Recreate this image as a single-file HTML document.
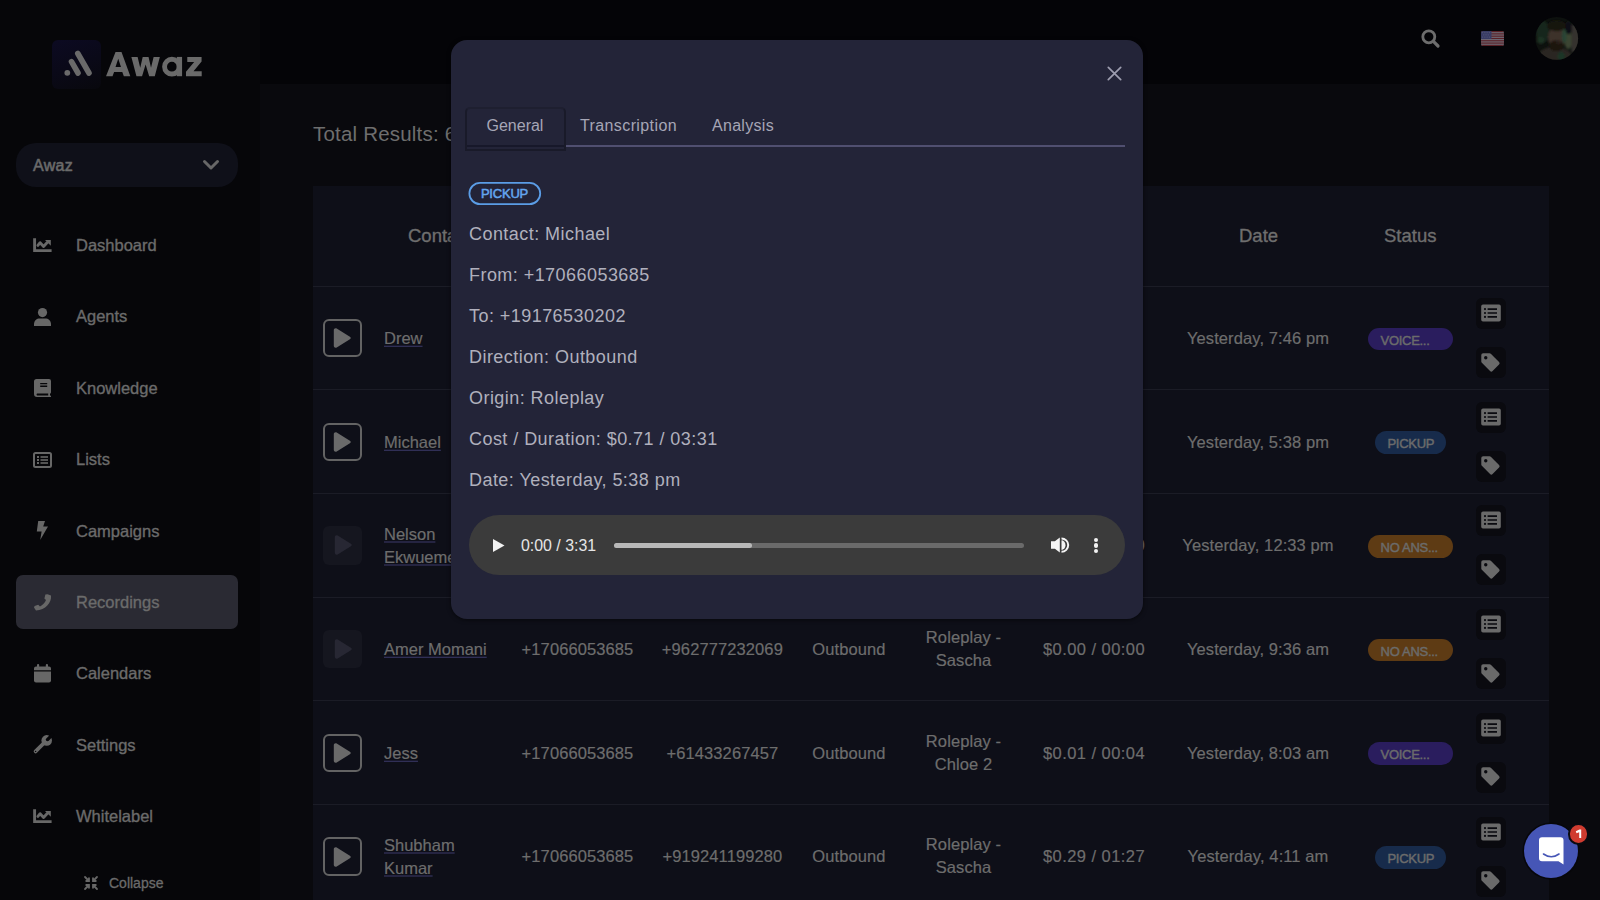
<!DOCTYPE html>
<html><head><meta charset="utf-8">
<style>
*{margin:0;padding:0;box-sizing:border-box}
html,body{width:1600px;height:900px;overflow:hidden;background:#040407;font-family:"Liberation Sans",sans-serif}
.abs{position:absolute}
svg{position:absolute;overflow:visible}
#sidebar{position:absolute;left:0;top:0;width:260px;height:900px;background:#060609}
#header{position:absolute;left:260px;top:0;width:1340px;height:84px;background:#040407}
#main{position:absolute;left:260px;top:84px;width:1340px;height:816px;background:#09090d}
.nav{position:absolute;left:76px;font-size:16.5px;line-height:20px;color:#6b6b6b;-webkit-text-stroke:0.35px #6b6b6b;white-space:nowrap}
#table{position:absolute;left:313px;top:186px;width:1236px;height:714px;background:#0e0f18}
.sep{position:absolute;left:313px;width:1236px;height:1px;background:#1b1c26}
.th{position:absolute;top:224px;font-size:18.5px;line-height:24px;color:#6e6e6e;-webkit-text-stroke:0.35px #6e6e6e;white-space:nowrap}
.row{position:absolute;left:313px;width:1236px;height:103.7px}
.td{position:absolute;top:50%;font-size:16.5px;letter-spacing:0.1px;color:#6d6d6d;-webkit-text-stroke:0.2px #6d6d6d;white-space:nowrap;line-height:23px;transform:translate(-50%,-50%);text-align:center}
.name{position:absolute;left:71px;top:50%;transform:translateY(-50%);font-size:16.5px;color:#6d6d6d;-webkit-text-stroke:0.2px #6d6d6d;line-height:22.5px;white-space:nowrap}
.name span{text-decoration:underline;text-decoration-color:#3d3b6b;text-underline-offset:2px;text-decoration-thickness:1px}
.play{position:absolute;left:10px;top:50%;margin-top:-19px;width:39px;height:38.5px;border:2px solid #636363;border-radius:6px}
.play svg{left:8.2px;top:7.4px}
.play.dis svg{left:10.5px;top:9.2px}
.play.dis{border:none;background:#15161f}
.badge{position:absolute;top:50%;margin-top:-10.3px;height:22.7px;border-radius:12px;font-size:13px;color:#6b6b6b;-webkit-text-stroke:0.45px #6b6b6b;letter-spacing:-0.3px;line-height:25.2px;padding-left:12.8px;text-align:left;white-space:nowrap}
.abox{position:absolute;left:1163px;width:30px;height:31px;background:#0a0a0f;border-radius:6px}
.abox svg{left:5px;top:6px}
#modal{position:absolute;left:450.5px;top:39.5px;width:692.5px;height:579.3px;background:#232438;border-radius:16px;box-shadow:0 1px 4px rgba(0,0,0,.55)}
.ml{position:absolute;left:469px;font-size:18px;line-height:22px;letter-spacing:0.45px;color:#b0b0bd;white-space:nowrap}
</style></head>
<body>
<div id="sidebar"></div>
<div id="header"></div>
<div id="main"></div>
<div class="abs" style="left:16px;top:575px;width:222px;height:54px;border-radius:7px;background:#2a2a33"></div>

<!-- logo -->
<div class="abs" style="left:52px;top:40px;width:49px;height:49px;border-radius:6px;background:linear-gradient(160deg,#0c0a22 0%,#0a0918 50%,#08080d 100%)"></div>
<svg style="left:52px;top:40px" width="49" height="49" viewBox="0 0 49 49">
  <circle cx="15.3" cy="32.8" r="2.9" fill="#6a6a6a"/>
  <line x1="19.5" y1="21.6" x2="26" y2="33" stroke="#6a6a6a" stroke-width="5.6" stroke-linecap="round"/>
  <line x1="25.8" y1="13.5" x2="37" y2="33" stroke="#6a6a6a" stroke-width="5.6" stroke-linecap="round"/>
</svg>
<svg style="left:102px;top:46px" width="104" height="36" viewBox="0 0 1600 554" preserveAspectRatio="none" fill="#6a6a6a">
  <path fill-rule="evenodd" d="M62,465 L208,92 L300,92 L436,465 L336,465 L312,402 L186,402 L162,465 Z M208,322 L292,322 L250,196 Z"/>
  <path d="M452,168 L548,168 L588,335 L626,168 L716,168 L754,335 L794,168 L890,168 L812,465 L726,465 L671,285 L616,465 L530,465 Z"/>
  <path fill-rule="evenodd" d="M925,318 A150,152 0 1,0 1225,318 A150,152 0 1,0 925,318 Z M1000,318 A75,76 0 1,0 1150,318 A75,76 0 1,0 1000,318 Z"/>
  <rect x="1150" y="168" width="82" height="297"/>
  <path d="M1312,168 L1532,168 L1532,238 L1408,388 L1534,388 L1534,465 L1292,465 L1292,396 L1418,246 L1312,246 Z"/>
</svg>

<!-- dropdown -->
<div class="abs" style="left:16px;top:143px;width:222px;height:44px;border-radius:20px;background:#0f1019"></div>
<div class="abs" style="left:33px;top:155.8px;font-size:16px;line-height:20px;letter-spacing:0.3px;color:#6b6b6b;-webkit-text-stroke:0.55px #6b6b6b">Awaz</div>
<svg style="left:203px;top:160px" width="16" height="10" viewBox="0 0 16 10"><path d="M1.5 1.5 L8 8 L14.5 1.5" fill="none" stroke="#676767" stroke-width="3" stroke-linecap="round" stroke-linejoin="round"/></svg>

<!-- nav icons -->
<svg style="left:28px;top:232px" width="30" height="26" viewBox="0 0 30 26">
  <path d="M6.6 6.2 V18.6 H23.6" fill="none" stroke="#686868" stroke-width="2.9" stroke-linejoin="miter"/>
  <path d="M9.9 13.4 L12.1 10.7 L15.6 14.4 L19.2 10.6" fill="none" stroke="#686868" stroke-width="2.9" stroke-linecap="round" stroke-linejoin="round"/>
  <path d="M17 8.1 H22.8 V13.7 Z" fill="#686868"/>
</svg>
<svg style="left:34px;top:308px" width="17" height="18" viewBox="0 0 17 18" fill="#676767">
  <circle cx="8.5" cy="4.6" r="4.6"/>
  <path d="M0 16.2 C0 12.4 2.8 10.4 5.6 10.4 H11.4 C14.2 10.4 17 12.4 17 16.2 V18 H0 Z"/>
</svg>
<svg style="left:34px;top:379px" width="17" height="18" viewBox="0 0 17 18" fill="#676767">
  <path d="M2.5 0 H15 A2 2 0 0 1 17 2 V13 C17 14 16.5 14.5 16 14.7 V16.3 C16.5 16.5 17 16.8 17 17.4 V18 H3 A3 3 0 0 1 0 15 V2.5 A2.5 2.5 0 0 1 2.5 0 Z M3 14.6 A1.2 1.2 0 0 0 3 16.4 H14.2 V14.6 Z M6.2 4 V5.3 H13.2 V4 Z M6.2 6.6 V7.9 H13.2 V6.6 Z" fill-rule="evenodd"/>
</svg>
<svg style="left:33px;top:452px" width="19" height="16" viewBox="0 0 19 16" fill="none" stroke="#676767">
  <rect x="1" y="1" width="17" height="14" rx="1.5" stroke-width="2"/>
  <g fill="#676767" stroke="none"><rect x="4" y="4" width="2" height="2"/><rect x="4" y="7" width="2" height="2"/><rect x="4" y="10" width="2" height="2"/><rect x="7.5" y="4.2" width="7.5" height="1.6"/><rect x="7.5" y="7.2" width="7.5" height="1.6"/><rect x="7.5" y="10.2" width="7.5" height="1.6"/></g>
</svg>
<svg style="left:36px;top:521px" width="13" height="19" viewBox="0 0 13 19" fill="#676767">
  <path d="M2.2 0 H9 L7.2 5.6 H12 L4.2 19 L5.6 10.4 H0.8 Z"/>
</svg>
<svg style="left:33px;top:593px" width="19" height="18" viewBox="0 0 19 18" fill="#676767">
  <path d="M14.5 1.2 L18 2.4 C18.8 9.5 12.5 17 3 17.5 L1 14.5 L1.6 13 L5.2 11.8 L7 13.4 C9.6 12.2 12 9.6 13 7 L11.4 5.4 L12.4 1.6 Z"/>
</svg>
<svg style="left:34px;top:664px" width="17" height="19" viewBox="0 0 17 19" fill="#676767">
  <rect x="3" y="0" width="2.2" height="4" rx="1"/><rect x="11.8" y="0" width="2.2" height="4" rx="1"/>
  <path d="M2 2.4 H15 A2 2 0 0 1 17 4.4 V6.2 H0 V4.4 A2 2 0 0 1 2 2.4 Z"/>
  <path d="M0 7.4 H17 V16.6 A2 2 0 0 1 15 18.6 H2 A2 2 0 0 1 0 16.6 Z"/>
</svg>
<svg style="left:28px;top:730px" width="30" height="30" viewBox="0 0 30 30">
  <line x1="18.5" y1="10.5" x2="7.6" y2="21.4" stroke="#686868" stroke-width="3.8" stroke-linecap="round"/>
  <circle cx="18.7" cy="10.4" r="5.3" fill="#686868"/>
  <line x1="19.6" y1="9.5" x2="25.5" y2="3.6" stroke="#060609" stroke-width="3.2"/>
  <circle cx="19.5" cy="9.6" r="1.7" fill="#060609"/>
  <circle cx="7.6" cy="21.4" r="0.7" fill="#060609"/>
</svg>
<svg style="left:28px;top:803px" width="30" height="26" viewBox="0 0 30 26">
  <path d="M6.6 6.2 V18.6 H23.6" fill="none" stroke="#686868" stroke-width="2.9" stroke-linejoin="miter"/>
  <path d="M9.9 13.4 L12.1 10.7 L15.6 14.4 L19.2 10.6" fill="none" stroke="#686868" stroke-width="2.9" stroke-linecap="round" stroke-linejoin="round"/>
  <path d="M17 8.1 H22.8 V13.7 Z" fill="#686868"/>
</svg>
<svg style="left:84px;top:876px" width="14" height="14" viewBox="0 0 14 14" fill="none" stroke="#676767" stroke-width="1.8" stroke-linecap="round">
  <path d="M1 1 L5 5 M5 2.2 V5 H2.2 M13 1 L9 5 M9 2.2 V5 H11.8 M1 13 L5 9 M2.2 9 H5 V11.8 M13 13 L9 9 M11.8 9 H9 V11.8"/>
</svg>

<!-- nav text -->
<div class="nav" style="top:234.7px">Dashboard</div>
<div class="nav" style="top:306.2px">Agents</div>
<div class="nav" style="top:377.7px">Knowledge</div>
<div class="nav" style="top:449.2px">Lists</div>
<div class="nav" style="top:520.7px">Campaigns</div>
<div class="nav" style="top:591.7px">Recordings</div>
<div class="nav" style="top:663.2px">Calendars</div>
<div class="nav" style="top:734.7px">Settings</div>
<div class="nav" style="top:806.2px">Whitelabel</div>
<div class="abs" style="left:109px;top:874px;font-size:14px;line-height:18px;color:#6b6b6b;-webkit-text-stroke:0.3px #6b6b6b">Collapse</div>
<!-- header icons -->
<svg style="left:1421px;top:29px" width="19" height="19" viewBox="0 0 19 19" fill="none" stroke="#6d6d6d" stroke-linecap="round">
  <circle cx="7.8" cy="7.8" r="6" stroke-width="2.8"/>
  <line x1="12.4" y1="12.4" x2="17" y2="17" stroke-width="3.2"/>
</svg>
<svg style="left:1481px;top:31px" width="23" height="15" viewBox="0 0 23 15">
  <defs><clipPath id="fc"><rect x="0" y="0" width="23" height="15" rx="2"/></clipPath></defs>
  <g clip-path="url(#fc)">
  <rect width="23" height="15" fill="#6e6a75"/>
  <rect y="0" width="23" height="1.15" fill="#5a2026"/><rect y="2.3" width="23" height="1.15" fill="#5a2026"/><rect y="4.6" width="23" height="1.15" fill="#5a2026"/><rect y="6.9" width="23" height="1.15" fill="#5a2026"/><rect y="9.2" width="23" height="1.15" fill="#5a2026"/><rect y="11.5" width="23" height="1.15" fill="#5a2026"/><rect y="13.8" width="23" height="1.2" fill="#5a2026"/>
  <rect width="10.5" height="8" fill="#383b64"/><g fill="#5a5c7a"><rect x="1.2" y="1.2" width="1" height="1"/><rect x="3.4" y="1.2" width="1" height="1"/><rect x="5.6" y="1.2" width="1" height="1"/><rect x="7.8" y="1.2" width="1" height="1"/><rect x="2.3" y="3.4" width="1" height="1"/><rect x="4.5" y="3.4" width="1" height="1"/><rect x="6.7" y="3.4" width="1" height="1"/><rect x="1.2" y="5.6" width="1" height="1"/><rect x="3.4" y="5.6" width="1" height="1"/><rect x="5.6" y="5.6" width="1" height="1"/><rect x="7.8" y="5.6" width="1" height="1"/></g>
  </g>
</svg>
<svg style="left:1530px;top:12px" width="54" height="54" viewBox="0 0 900 900">
  <defs><clipPath id="av"><circle cx="445" cy="440" r="357"/></clipPath>
  <filter id="bl" x="-20%" y="-20%" width="140%" height="140%"><feGaussianBlur stdDeviation="22"/></filter></defs>
  <g clip-path="url(#av)">
    <rect x="0" y="0" width="900" height="900" fill="#0d110e"/>
    <g filter="url(#bl)">
      <ellipse cx="210" cy="330" rx="110" ry="190" fill="#15261b"/>
      <ellipse cx="180" cy="470" rx="60" ry="60" fill="#1e3022"/>
      <ellipse cx="640" cy="470" rx="70" ry="150" fill="#3a4530"/>
      <rect x="690" y="210" width="150" height="460" fill="#34302d"/>
      <ellipse cx="640" cy="260" rx="60" ry="110" fill="#0b0d14"/>
      <ellipse cx="410" cy="730" rx="280" ry="150" fill="#2c2622"/>
      <ellipse cx="520" cy="740" rx="60" ry="80" fill="#1f3427"/>
      <ellipse cx="450" cy="420" rx="150" ry="190" fill="#3d3129"/>
      <ellipse cx="570" cy="400" rx="40" ry="120" fill="#2a4434"/>
      <ellipse cx="445" cy="230" rx="160" ry="90" fill="#17120f"/>
      <ellipse cx="440" cy="560" rx="120" ry="90" fill="#1c1611"/>
      <ellipse cx="470" cy="510" rx="50" ry="22" fill="#2b231d"/>
    </g>
  </g>
</svg>
<!-- main -->
<div class="abs" style="left:313px;top:122px;font-size:20.5px;line-height:24px;letter-spacing:0.2px;color:#6e6e6e">Total Results: 64</div>
<div id="table"></div>
<div class="sep" style="top:285.5px"></div>
<div class="sep" style="top:389.2px"></div>
<div class="sep" style="top:492.9px"></div>
<div class="sep" style="top:596.6px"></div>
<div class="sep" style="top:700.3px"></div>
<div class="sep" style="top:804px"></div>
<div class="th" style="left:408px">Contact</div>
<div class="th" style="left:1239px">Date</div>
<div class="th" style="left:1384px">Status</div>

<!--ROWS-->
<div class="row" style="top:286.0px">
<div class="play"><svg width="18" height="20" viewBox="0 0 18 20"><path d="M0.8 2.2 C0.8 0.6 2.4 -0.2 3.7 0.6 L16.9 8.7 C18 9.4 18 10.6 16.9 11.3 L3.7 19.4 C2.4 20.2 0.8 19.4 0.8 17.8 Z" fill="#6a6a6a"/></svg></div>
<div class="name"><span>Drew</span></div>
<div class="td" style="left:264.5px">+17066053685</div>
<div class="td" style="left:409.4px">+19176530202</div>
<div class="td" style="left:536.0px">Outbound</div>
<div class="td" style="left:781.0px;letter-spacing:0.1px">$0.05 / 00:19</div>
<div class="td" style="left:945.0px">Yesterday, 7:46 pm</div>
<div class="td org" style="left:650.5px">Roleplay -<br>Sascha</div>
<div class="badge" style="left:1054.8px;width:85px;background:#2a1d5e">VOICE...</div>
<div class="abox" style="top:12px"><svg width="20" height="18" viewBox="0 0 20 18"><path fill="#6a6a6a" fill-rule="evenodd" d="M2 0.5 H18 A1.8 1.8 0 0 1 19.8 2.3 V15.7 A1.8 1.8 0 0 1 18 17.5 H2 A1.8 1.8 0 0 1 0.2 15.7 V2.3 A1.8 1.8 0 0 1 2 0.5 Z M4 4 A1.1 1.1 0 1 0 4 6.2 A1.1 1.1 0 1 0 4 4 Z M4 7.9 A1.1 1.1 0 1 0 4 10.1 A1.1 1.1 0 1 0 4 7.9 Z M4 11.8 A1.1 1.1 0 1 0 4 14 A1.1 1.1 0 1 0 4 11.8 Z M6.6 4.3 V5.9 H16 V4.3 Z M6.6 8.2 V9.8 H16 V8.2 Z M6.6 12.1 V13.7 H16 V12.1 Z"/></svg></div>
<div class="abox" style="top:61px"><svg width="19" height="19" viewBox="0 0 20 20" style="top:5.5px"><path fill="#6a6a6a" fill-rule="evenodd" d="M0.3 2.2 A1.9 1.9 0 0 1 2.2 0.3 H9 A1.9 1.9 0 0 1 10.3 0.9 L19 9.5 A1.9 1.9 0 0 1 19 12.2 L12.2 19 A1.9 1.9 0 0 1 9.5 19 L0.9 10.3 A1.9 1.9 0 0 1 0.3 9 Z M5 3.2 A1.8 1.8 0 1 0 5 6.8 A1.8 1.8 0 1 0 5 3.2 Z"/></svg></div>
</div>
<div class="row" style="top:389.7px">
<div class="play"><svg width="18" height="20" viewBox="0 0 18 20"><path d="M0.8 2.2 C0.8 0.6 2.4 -0.2 3.7 0.6 L16.9 8.7 C18 9.4 18 10.6 16.9 11.3 L3.7 19.4 C2.4 20.2 0.8 19.4 0.8 17.8 Z" fill="#6a6a6a"/></svg></div>
<div class="name"><span>Michael</span></div>
<div class="td" style="left:264.5px">+17066053685</div>
<div class="td" style="left:409.4px">+19176530202</div>
<div class="td" style="left:536.0px">Outbound</div>
<div class="td" style="left:781.0px;letter-spacing:0.1px">$0.71 / 03:31</div>
<div class="td" style="left:945.0px">Yesterday, 5:38 pm</div>
<div class="td org" style="left:650.5px">Roleplay -<br>Sascha</div>
<div class="badge" style="left:1061.7px;width:71.5px;background:#172b4b">PICKUP</div>
<div class="abox" style="top:12px"><svg width="20" height="18" viewBox="0 0 20 18"><path fill="#6a6a6a" fill-rule="evenodd" d="M2 0.5 H18 A1.8 1.8 0 0 1 19.8 2.3 V15.7 A1.8 1.8 0 0 1 18 17.5 H2 A1.8 1.8 0 0 1 0.2 15.7 V2.3 A1.8 1.8 0 0 1 2 0.5 Z M4 4 A1.1 1.1 0 1 0 4 6.2 A1.1 1.1 0 1 0 4 4 Z M4 7.9 A1.1 1.1 0 1 0 4 10.1 A1.1 1.1 0 1 0 4 7.9 Z M4 11.8 A1.1 1.1 0 1 0 4 14 A1.1 1.1 0 1 0 4 11.8 Z M6.6 4.3 V5.9 H16 V4.3 Z M6.6 8.2 V9.8 H16 V8.2 Z M6.6 12.1 V13.7 H16 V12.1 Z"/></svg></div>
<div class="abox" style="top:61px"><svg width="19" height="19" viewBox="0 0 20 20" style="top:5.5px"><path fill="#6a6a6a" fill-rule="evenodd" d="M0.3 2.2 A1.9 1.9 0 0 1 2.2 0.3 H9 A1.9 1.9 0 0 1 10.3 0.9 L19 9.5 A1.9 1.9 0 0 1 19 12.2 L12.2 19 A1.9 1.9 0 0 1 9.5 19 L0.9 10.3 A1.9 1.9 0 0 1 0.3 9 Z M5 3.2 A1.8 1.8 0 1 0 5 6.8 A1.8 1.8 0 1 0 5 3.2 Z"/></svg></div>
</div>
<div class="row" style="top:493.4px">
<div class="play dis"><svg width="18" height="20" viewBox="0 0 18 20"><path d="M0.8 2.2 C0.8 0.6 2.4 -0.2 3.7 0.6 L16.9 8.7 C18 9.4 18 10.6 16.9 11.3 L3.7 19.4 C2.4 20.2 0.8 19.4 0.8 17.8 Z" fill="#272733"/></svg></div>
<div class="name"><span>Nelson</span><br><span>Ekwueme</span></div>
<div class="td" style="left:264.5px">+17066053685</div>
<div class="td" style="left:409.4px">+2348012345678</div>
<div class="td" style="left:536.0px">Outbound</div>
<div class="td" style="left:781.0px;letter-spacing:0.45px">$0.00 / 00:00</div>
<div class="td" style="left:945.0px">Yesterday, 12:33 pm</div>
<div class="td org" style="left:650.5px">Roleplay -<br>Sascha</div>
<div class="badge" style="left:1054.8px;width:85px;background:#5e3b14">NO ANS...</div>
<div class="abox" style="top:12px"><svg width="20" height="18" viewBox="0 0 20 18"><path fill="#6a6a6a" fill-rule="evenodd" d="M2 0.5 H18 A1.8 1.8 0 0 1 19.8 2.3 V15.7 A1.8 1.8 0 0 1 18 17.5 H2 A1.8 1.8 0 0 1 0.2 15.7 V2.3 A1.8 1.8 0 0 1 2 0.5 Z M4 4 A1.1 1.1 0 1 0 4 6.2 A1.1 1.1 0 1 0 4 4 Z M4 7.9 A1.1 1.1 0 1 0 4 10.1 A1.1 1.1 0 1 0 4 7.9 Z M4 11.8 A1.1 1.1 0 1 0 4 14 A1.1 1.1 0 1 0 4 11.8 Z M6.6 4.3 V5.9 H16 V4.3 Z M6.6 8.2 V9.8 H16 V8.2 Z M6.6 12.1 V13.7 H16 V12.1 Z"/></svg></div>
<div class="abox" style="top:61px"><svg width="19" height="19" viewBox="0 0 20 20" style="top:5.5px"><path fill="#6a6a6a" fill-rule="evenodd" d="M0.3 2.2 A1.9 1.9 0 0 1 2.2 0.3 H9 A1.9 1.9 0 0 1 10.3 0.9 L19 9.5 A1.9 1.9 0 0 1 19 12.2 L12.2 19 A1.9 1.9 0 0 1 9.5 19 L0.9 10.3 A1.9 1.9 0 0 1 0.3 9 Z M5 3.2 A1.8 1.8 0 1 0 5 6.8 A1.8 1.8 0 1 0 5 3.2 Z"/></svg></div>
</div>
<div class="row" style="top:597.1px">
<div class="play dis"><svg width="18" height="20" viewBox="0 0 18 20"><path d="M0.8 2.2 C0.8 0.6 2.4 -0.2 3.7 0.6 L16.9 8.7 C18 9.4 18 10.6 16.9 11.3 L3.7 19.4 C2.4 20.2 0.8 19.4 0.8 17.8 Z" fill="#272733"/></svg></div>
<div class="name"><span>Amer Momani</span></div>
<div class="td" style="left:264.5px">+17066053685</div>
<div class="td" style="left:409.4px">+962777232069</div>
<div class="td" style="left:536.0px">Outbound</div>
<div class="td" style="left:781.0px;letter-spacing:0.45px">$0.00 / 00:00</div>
<div class="td" style="left:945.0px">Yesterday, 9:36 am</div>
<div class="td org" style="left:650.5px">Roleplay -<br>Sascha</div>
<div class="badge" style="left:1054.8px;width:85px;background:#5e3b14">NO ANS...</div>
<div class="abox" style="top:12px"><svg width="20" height="18" viewBox="0 0 20 18"><path fill="#6a6a6a" fill-rule="evenodd" d="M2 0.5 H18 A1.8 1.8 0 0 1 19.8 2.3 V15.7 A1.8 1.8 0 0 1 18 17.5 H2 A1.8 1.8 0 0 1 0.2 15.7 V2.3 A1.8 1.8 0 0 1 2 0.5 Z M4 4 A1.1 1.1 0 1 0 4 6.2 A1.1 1.1 0 1 0 4 4 Z M4 7.9 A1.1 1.1 0 1 0 4 10.1 A1.1 1.1 0 1 0 4 7.9 Z M4 11.8 A1.1 1.1 0 1 0 4 14 A1.1 1.1 0 1 0 4 11.8 Z M6.6 4.3 V5.9 H16 V4.3 Z M6.6 8.2 V9.8 H16 V8.2 Z M6.6 12.1 V13.7 H16 V12.1 Z"/></svg></div>
<div class="abox" style="top:61px"><svg width="19" height="19" viewBox="0 0 20 20" style="top:5.5px"><path fill="#6a6a6a" fill-rule="evenodd" d="M0.3 2.2 A1.9 1.9 0 0 1 2.2 0.3 H9 A1.9 1.9 0 0 1 10.3 0.9 L19 9.5 A1.9 1.9 0 0 1 19 12.2 L12.2 19 A1.9 1.9 0 0 1 9.5 19 L0.9 10.3 A1.9 1.9 0 0 1 0.3 9 Z M5 3.2 A1.8 1.8 0 1 0 5 6.8 A1.8 1.8 0 1 0 5 3.2 Z"/></svg></div>
</div>
<div class="row" style="top:700.8px">
<div class="play"><svg width="18" height="20" viewBox="0 0 18 20"><path d="M0.8 2.2 C0.8 0.6 2.4 -0.2 3.7 0.6 L16.9 8.7 C18 9.4 18 10.6 16.9 11.3 L3.7 19.4 C2.4 20.2 0.8 19.4 0.8 17.8 Z" fill="#6a6a6a"/></svg></div>
<div class="name"><span>Jess</span></div>
<div class="td" style="left:264.5px">+17066053685</div>
<div class="td" style="left:409.4px">+61433267457</div>
<div class="td" style="left:536.0px">Outbound</div>
<div class="td" style="left:781.0px;letter-spacing:0.45px">$0.01 / 00:04</div>
<div class="td" style="left:945.0px">Yesterday, 8:03 am</div>
<div class="td org" style="left:650.5px">Roleplay -<br>Chloe 2</div>
<div class="badge" style="left:1054.8px;width:85px;background:#2a1d5e">VOICE...</div>
<div class="abox" style="top:12px"><svg width="20" height="18" viewBox="0 0 20 18"><path fill="#6a6a6a" fill-rule="evenodd" d="M2 0.5 H18 A1.8 1.8 0 0 1 19.8 2.3 V15.7 A1.8 1.8 0 0 1 18 17.5 H2 A1.8 1.8 0 0 1 0.2 15.7 V2.3 A1.8 1.8 0 0 1 2 0.5 Z M4 4 A1.1 1.1 0 1 0 4 6.2 A1.1 1.1 0 1 0 4 4 Z M4 7.9 A1.1 1.1 0 1 0 4 10.1 A1.1 1.1 0 1 0 4 7.9 Z M4 11.8 A1.1 1.1 0 1 0 4 14 A1.1 1.1 0 1 0 4 11.8 Z M6.6 4.3 V5.9 H16 V4.3 Z M6.6 8.2 V9.8 H16 V8.2 Z M6.6 12.1 V13.7 H16 V12.1 Z"/></svg></div>
<div class="abox" style="top:61px"><svg width="19" height="19" viewBox="0 0 20 20" style="top:5.5px"><path fill="#6a6a6a" fill-rule="evenodd" d="M0.3 2.2 A1.9 1.9 0 0 1 2.2 0.3 H9 A1.9 1.9 0 0 1 10.3 0.9 L19 9.5 A1.9 1.9 0 0 1 19 12.2 L12.2 19 A1.9 1.9 0 0 1 9.5 19 L0.9 10.3 A1.9 1.9 0 0 1 0.3 9 Z M5 3.2 A1.8 1.8 0 1 0 5 6.8 A1.8 1.8 0 1 0 5 3.2 Z"/></svg></div>
</div>
<div class="row" style="top:804.5px">
<div class="play"><svg width="18" height="20" viewBox="0 0 18 20"><path d="M0.8 2.2 C0.8 0.6 2.4 -0.2 3.7 0.6 L16.9 8.7 C18 9.4 18 10.6 16.9 11.3 L3.7 19.4 C2.4 20.2 0.8 19.4 0.8 17.8 Z" fill="#6a6a6a"/></svg></div>
<div class="name"><span>Shubham</span><br><span>Kumar</span></div>
<div class="td" style="left:264.5px">+17066053685</div>
<div class="td" style="left:409.4px">+919241199280</div>
<div class="td" style="left:536.0px">Outbound</div>
<div class="td" style="left:781.0px;letter-spacing:0.45px">$0.29 / 01:27</div>
<div class="td" style="left:945.0px">Yesterday, 4:11 am</div>
<div class="td org" style="left:650.5px">Roleplay -<br>Sascha</div>
<div class="badge" style="left:1061.7px;width:71.5px;background:#172b4b">PICKUP</div>
<div class="abox" style="top:12px"><svg width="20" height="18" viewBox="0 0 20 18"><path fill="#6a6a6a" fill-rule="evenodd" d="M2 0.5 H18 A1.8 1.8 0 0 1 19.8 2.3 V15.7 A1.8 1.8 0 0 1 18 17.5 H2 A1.8 1.8 0 0 1 0.2 15.7 V2.3 A1.8 1.8 0 0 1 2 0.5 Z M4 4 A1.1 1.1 0 1 0 4 6.2 A1.1 1.1 0 1 0 4 4 Z M4 7.9 A1.1 1.1 0 1 0 4 10.1 A1.1 1.1 0 1 0 4 7.9 Z M4 11.8 A1.1 1.1 0 1 0 4 14 A1.1 1.1 0 1 0 4 11.8 Z M6.6 4.3 V5.9 H16 V4.3 Z M6.6 8.2 V9.8 H16 V8.2 Z M6.6 12.1 V13.7 H16 V12.1 Z"/></svg></div>
<div class="abox" style="top:61px"><svg width="19" height="19" viewBox="0 0 20 20" style="top:5.5px"><path fill="#6a6a6a" fill-rule="evenodd" d="M0.3 2.2 A1.9 1.9 0 0 1 2.2 0.3 H9 A1.9 1.9 0 0 1 10.3 0.9 L19 9.5 A1.9 1.9 0 0 1 19 12.2 L12.2 19 A1.9 1.9 0 0 1 9.5 19 L0.9 10.3 A1.9 1.9 0 0 1 0.3 9 Z M5 3.2 A1.8 1.8 0 1 0 5 6.8 A1.8 1.8 0 1 0 5 3.2 Z"/></svg></div>
</div>
<!--/ROWS-->
<div id="modal"></div>
<svg style="left:1107px;top:66px" width="15" height="15" viewBox="0 0 15 15" stroke="#9d9daf" stroke-width="1.7" stroke-linecap="round"><path d="M1.3 1.3 L13.7 13.7 M13.7 1.3 L1.3 13.7"/></svg>
<!-- tabs -->
<div class="abs" style="left:566px;top:144.5px;width:559px;height:2.5px;background:#504f70"></div>
<div class="abs" style="left:464.5px;top:106.5px;width:101.5px;height:44px;border:2px solid #191a29;border-top-color:#1e1f30;border-radius:5px 5px 1px 1px"></div>
<div class="abs" style="left:467px;top:144.5px;width:97px;height:2.5px;background:#17182a"></div>
<div class="abs" style="left:486.5px;top:116px;font-size:16px;line-height:20px;color:#a6a6b6">General</div>
<div class="abs" style="left:580px;top:116px;font-size:16px;line-height:20px;letter-spacing:0.39px;color:#a6a6b6">Transcription</div>
<div class="abs" style="left:712px;top:116px;font-size:16px;line-height:20px;letter-spacing:0.3px;color:#a6a6b6">Analysis</div>
<!-- pickup -->
<svg style="left:466px;top:180px" width="78" height="28" viewBox="0 0 78 28"><rect x="3.4" y="2.9" width="70.8" height="21.2" rx="10.6" fill="none" stroke="#5b9de6" stroke-width="1.8"/></svg>
<div class="abs" style="left:469px;top:185px;width:71px;text-align:center;font-size:13px;line-height:17px;letter-spacing:-0.2px;color:#64a6ef;-webkit-text-stroke:0.5px #64a6ef">PICKUP</div>
<div class="ml" style="top:223px">Contact: Michael</div>
<div class="ml" style="top:264px">From: +17066053685</div>
<div class="ml" style="top:305px">To: +19176530202</div>
<div class="ml" style="top:346px">Direction: Outbound</div>
<div class="ml" style="top:387px">Origin: Roleplay</div>
<div class="ml" style="top:428px">Cost / Duration: $0.71 / 03:31</div>
<div class="ml" style="top:469px">Date: Yesterday, 5:38 pm</div>
<!-- audio -->
<div class="abs" style="left:469px;top:515px;width:656px;height:60px;border-radius:30px;background:#3b3b3b"></div>
<svg style="left:493px;top:539px" width="12" height="13" viewBox="0 0 12 13"><path d="M0 0 L11.5 6.5 L0 13 Z" fill="#f2f2f2"/></svg>
<div class="abs" style="left:521px;top:535.5px;font-size:15.9px;line-height:20px;color:#e6e6e6">0:00 / 3:31</div>
<div class="abs" style="left:614px;top:543px;width:410px;height:4.5px;border-radius:3px;background:#6a6a6a"></div>
<div class="abs" style="left:614px;top:543px;width:137.5px;height:4.5px;border-radius:3px;background:#b8b8b8"></div>
<svg style="left:1050px;top:536px" width="20" height="18" viewBox="0 0 20 18">
  <path d="M1 5.2 H4.9 L9.8 1.6 V16.6 L4.9 12.8 H1 Z" fill="#f5f5f5"/>
  <path d="M11.5 4.3 A4 4.85 0 0 1 11.5 14 Z" fill="#f5f5f5"/>
  <path d="M11.5 2.4 A6.7 6.7 0 0 1 11.5 15.8" fill="none" stroke="#f5f5f5" stroke-width="2"/>
</svg>
<div class="abs" style="left:1093.6px;top:537.5px;width:4.6px;height:4.6px;border-radius:50%;background:#f2f2f2"></div>
<div class="abs" style="left:1093.6px;top:543px;width:4.6px;height:4.6px;border-radius:50%;background:#f2f2f2"></div>
<div class="abs" style="left:1093.6px;top:548.5px;width:4.6px;height:4.6px;border-radius:50%;background:#f2f2f2"></div>

<!-- intercom -->
<div class="abs" style="left:1524px;top:824px;width:54px;height:54px;border-radius:50%;background:#4656b6;box-shadow:0 0 0 1.5px #07070b"></div>
<svg style="left:1539px;top:836.5px" width="25" height="28" viewBox="0 0 25 28">
  <path d="M3 0.3 H21.5 A3 3 0 0 1 24.5 3.3 V27.5 L19.5 24.3 H3 A3 3 0 0 1 0 21.3 V3.3 A3 3 0 0 1 3 0.3 Z" fill="#ffffff"/>
  <path d="M4.5 17 Q12.3 22.5 20 17" fill="none" stroke="#4656b6" stroke-width="1.6" stroke-linecap="round"/>
</svg>
<div class="abs" style="left:1567.5px;top:823px;width:21.5px;height:21.5px;border-radius:50%;background:#d03c30;border:2px solid #0a0a10"></div>
<svg style="left:1570px;top:826px" width="16" height="16" viewBox="0 0 16 16"><path d="M5.8 5.3 L9.4 3.6 H11.2 V12 H9.2 V6.2 L6.5 7.3 Z" fill="#ffffff"/></svg>

</body></html>
